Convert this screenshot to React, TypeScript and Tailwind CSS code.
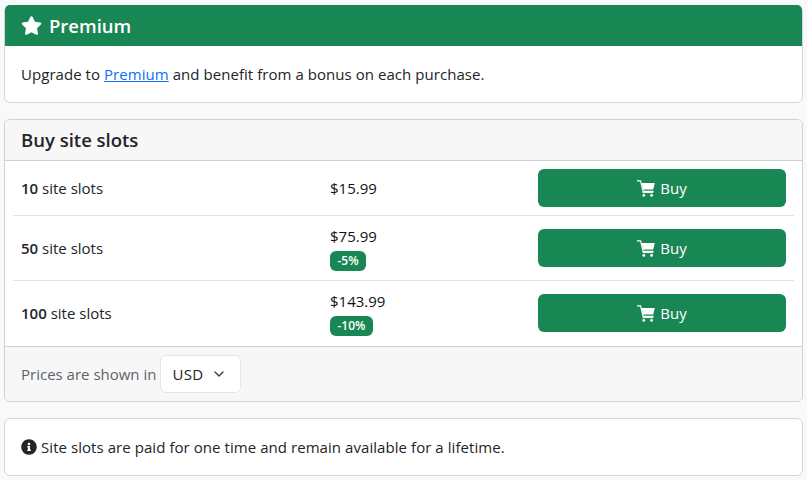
import { FaStar, FaInfoCircle } from "react-icons/fa";
import { ChevronDown } from "lucide-react";

const plans = [
  { slots: 10, price: "$15.99", rowClass: "h-[55px] border-b border-[#dee2e6]" },
  { slots: 50, price: "$75.99", discount: "-5%", rowClass: "h-[65px] border-b border-[#dee2e6]" },
  { slots: 100, price: "$143.99", discount: "-10%", rowClass: "h-[65px] pb-px" },
];

const font = "font-['Open_Sans','Noto_Sans',sans-serif]";

function CartIcon() {
  return (
    <svg width="18" height="17" viewBox="0 0 18 17" fill="currentColor" className="mr-[5px]">
      <path d="M0 .8h3.6l2.5 10.6h10.4" fill="none" stroke="currentColor" strokeWidth="1.2" />
      <path d="M4.6 3h13.2l-1.6 6.4H6.1z" />
      <path d="M5.5 12.6h10.8" fill="none" stroke="currentColor" strokeWidth="1" />
      <circle cx="6.8" cy="15.4" r="1.4" />
      <circle cx="14.6" cy="15.4" r="1.4" />
    </svg>
  );
}

export default function App() {
  return (
    <div className={`${font} h-[480px] overflow-hidden bg-[#f8f9fa] px-[4px] pt-[5px] text-[15px] text-[#212529]`}>
      {/* Premium */}
      <div className="h-[98px] rounded-[6px] border border-[#d5d6d7] bg-white">
        <div className="-mt-px flex h-[41px] items-center rounded-t-[5px] bg-[#198754] pl-[16px] text-[18.5px] font-semibold text-white">
          <FaStar size={21} className="mr-[7px]" />
          Premium
        </div>
        <p className="pl-[16px] pt-[17px] tracking-[0.05px]">
          Upgrade to <a href="#" className="text-[#0d6efd] underline">Premium</a> and benefit from a bonus on each purchase.
        </p>
      </div>

      {/* Buy site slots */}
      <div className="mt-[16px] h-[283px] overflow-hidden rounded-[6px] border border-[#d0d1d2] bg-white">
        <div className="flex h-[41px] items-center border-b border-[#d0d1d2] bg-[#f7f7f7] pl-[16px] text-[18.5px] font-semibold">
          Buy site slots
        </div>
        <div className="px-[8px]">
          {plans.map((p) => (
            <div key={p.slots} className={`flex items-center ${p.rowClass}`}>
              <div className="w-[317px] pl-[8px]">
                <b className="font-semibold">{p.slots}</b> site slots
              </div>
              <div className="w-[208px]">
                <div className="leading-[22px] text-[#111]">{p.price}</div>
                {p.discount && (
                  <div className="mt-[4px] w-fit rounded-[6px] bg-[#198754] px-[7.5px] py-[3px] text-[12px] leading-[14px] font-semibold text-white">
                    {p.discount}
                  </div>
                )}
              </div>
              <button className="flex h-[38px] w-[248px] items-center justify-center rounded-[6px] bg-[#198754] text-white">
                <CartIcon />
                Buy
              </button>
            </div>
          ))}
        </div>
        <div className="flex h-[55px] items-center border-t border-[#d0d1d2] bg-[#f7f7f7] pl-[16px] text-[#5c636a]">
          Prices are shown in
          <div className="ml-[4px] flex h-[38px] w-[81px] items-center rounded-[6px] border border-[#e3e5e8] bg-white pl-[11px] tracking-[0.3px] text-[#212529]">
            USD
            <ChevronDown size={16} strokeWidth={2} className="ml-[8px] text-[#343a40]" />
          </div>
        </div>
      </div>

      {/* Note */}
      <div className="mt-[16px] flex h-[58px] items-center rounded-[6px] border border-[#d5d6d7] bg-white pl-[16px] tracking-[0.06px]">
        <FaInfoCircle size={16} className="mr-[4px] text-[#212529]" />
        Site slots are paid for one time and remain available for a lifetime.
      </div>
    </div>
  );
}
